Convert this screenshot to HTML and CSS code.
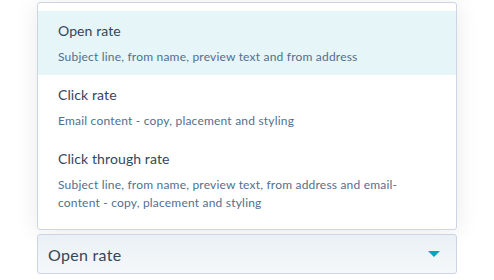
FILE: index.html
```html
<!DOCTYPE html>
<html lang="en">
<head>
    <meta charset="UTF-8">
    <title>Metric select</title>
    <link rel="stylesheet" href="styles.css">
</head>
<body>
    <div class="field">
        <ul class="dropdown">
            <li class="option active">
                <div class="option-title">Open rate</div>
                <div class="option-help">Subject line, from name, preview text and from address</div>
            </li>
            <li class="option">
                <div class="option-title">Click rate</div>
                <div class="option-help">Email content - copy, placement and styling</div>
            </li>
            <li class="option">
                <div class="option-title">Click through rate</div>
                <div class="option-help">Subject line, from name, preview text, from address and email-content - copy, placement and styling</div>
            </li>
        </ul>
        <div class="select">
            <span class="select-value">Open rate</span>
            <span class="caret"></span>
        </div>
    </div>
</body>
</html>
```
FILE: styles.css
```css
* {
    margin: 0;
    padding: 0;
    box-sizing: border-box;
}

body {
    font-family: Lato, 'Open Sans', sans-serif;
    background-color: #fff;
    color: #33475b;
}

.field {
    width: 420px;
    margin-left: 37px;
    padding-top: 2px;
}

.dropdown {
    list-style: none;
    background-color: #fff;
    border: 1px solid #cbd6e2;
    border-radius: 3px;
    padding: 8px 0;
    box-shadow: 0 2px 24px rgba(0, 0, 0, 0.09);
}

.option {
    padding: 9px 20px;
}

.option.active {
    background-color: #e5f5f8;
}

.option-title {
    font-size: 14px;
    line-height: 22px;
    letter-spacing: 0.1px;
    color: #33475b;
}

.option-help {
    font-size: 12px;
    line-height: 18px;
    letter-spacing: 0.2px;
    margin-top: 6px;
    color: #516f90;
    padding-right: 20px;
}

.select {
    display: flex;
    align-items: center;
    justify-content: space-between;
    height: 40px;
    margin-top: 4px;
    padding: 0 16px 0 10px;
    border: 1px solid #cbd6e2;
    border-radius: 3px;
    background: linear-gradient(to bottom, #eaf0f6, #f5f8fa);
}

.select-value {
    font-size: 16px;
    letter-spacing: 0.3px;
    color: #33475b;
}

.caret {
    width: 0;
    height: 0;
    border-left: 6px solid transparent;
    border-right: 6px solid transparent;
    border-top: 6px solid #00a4bd;
}
```
